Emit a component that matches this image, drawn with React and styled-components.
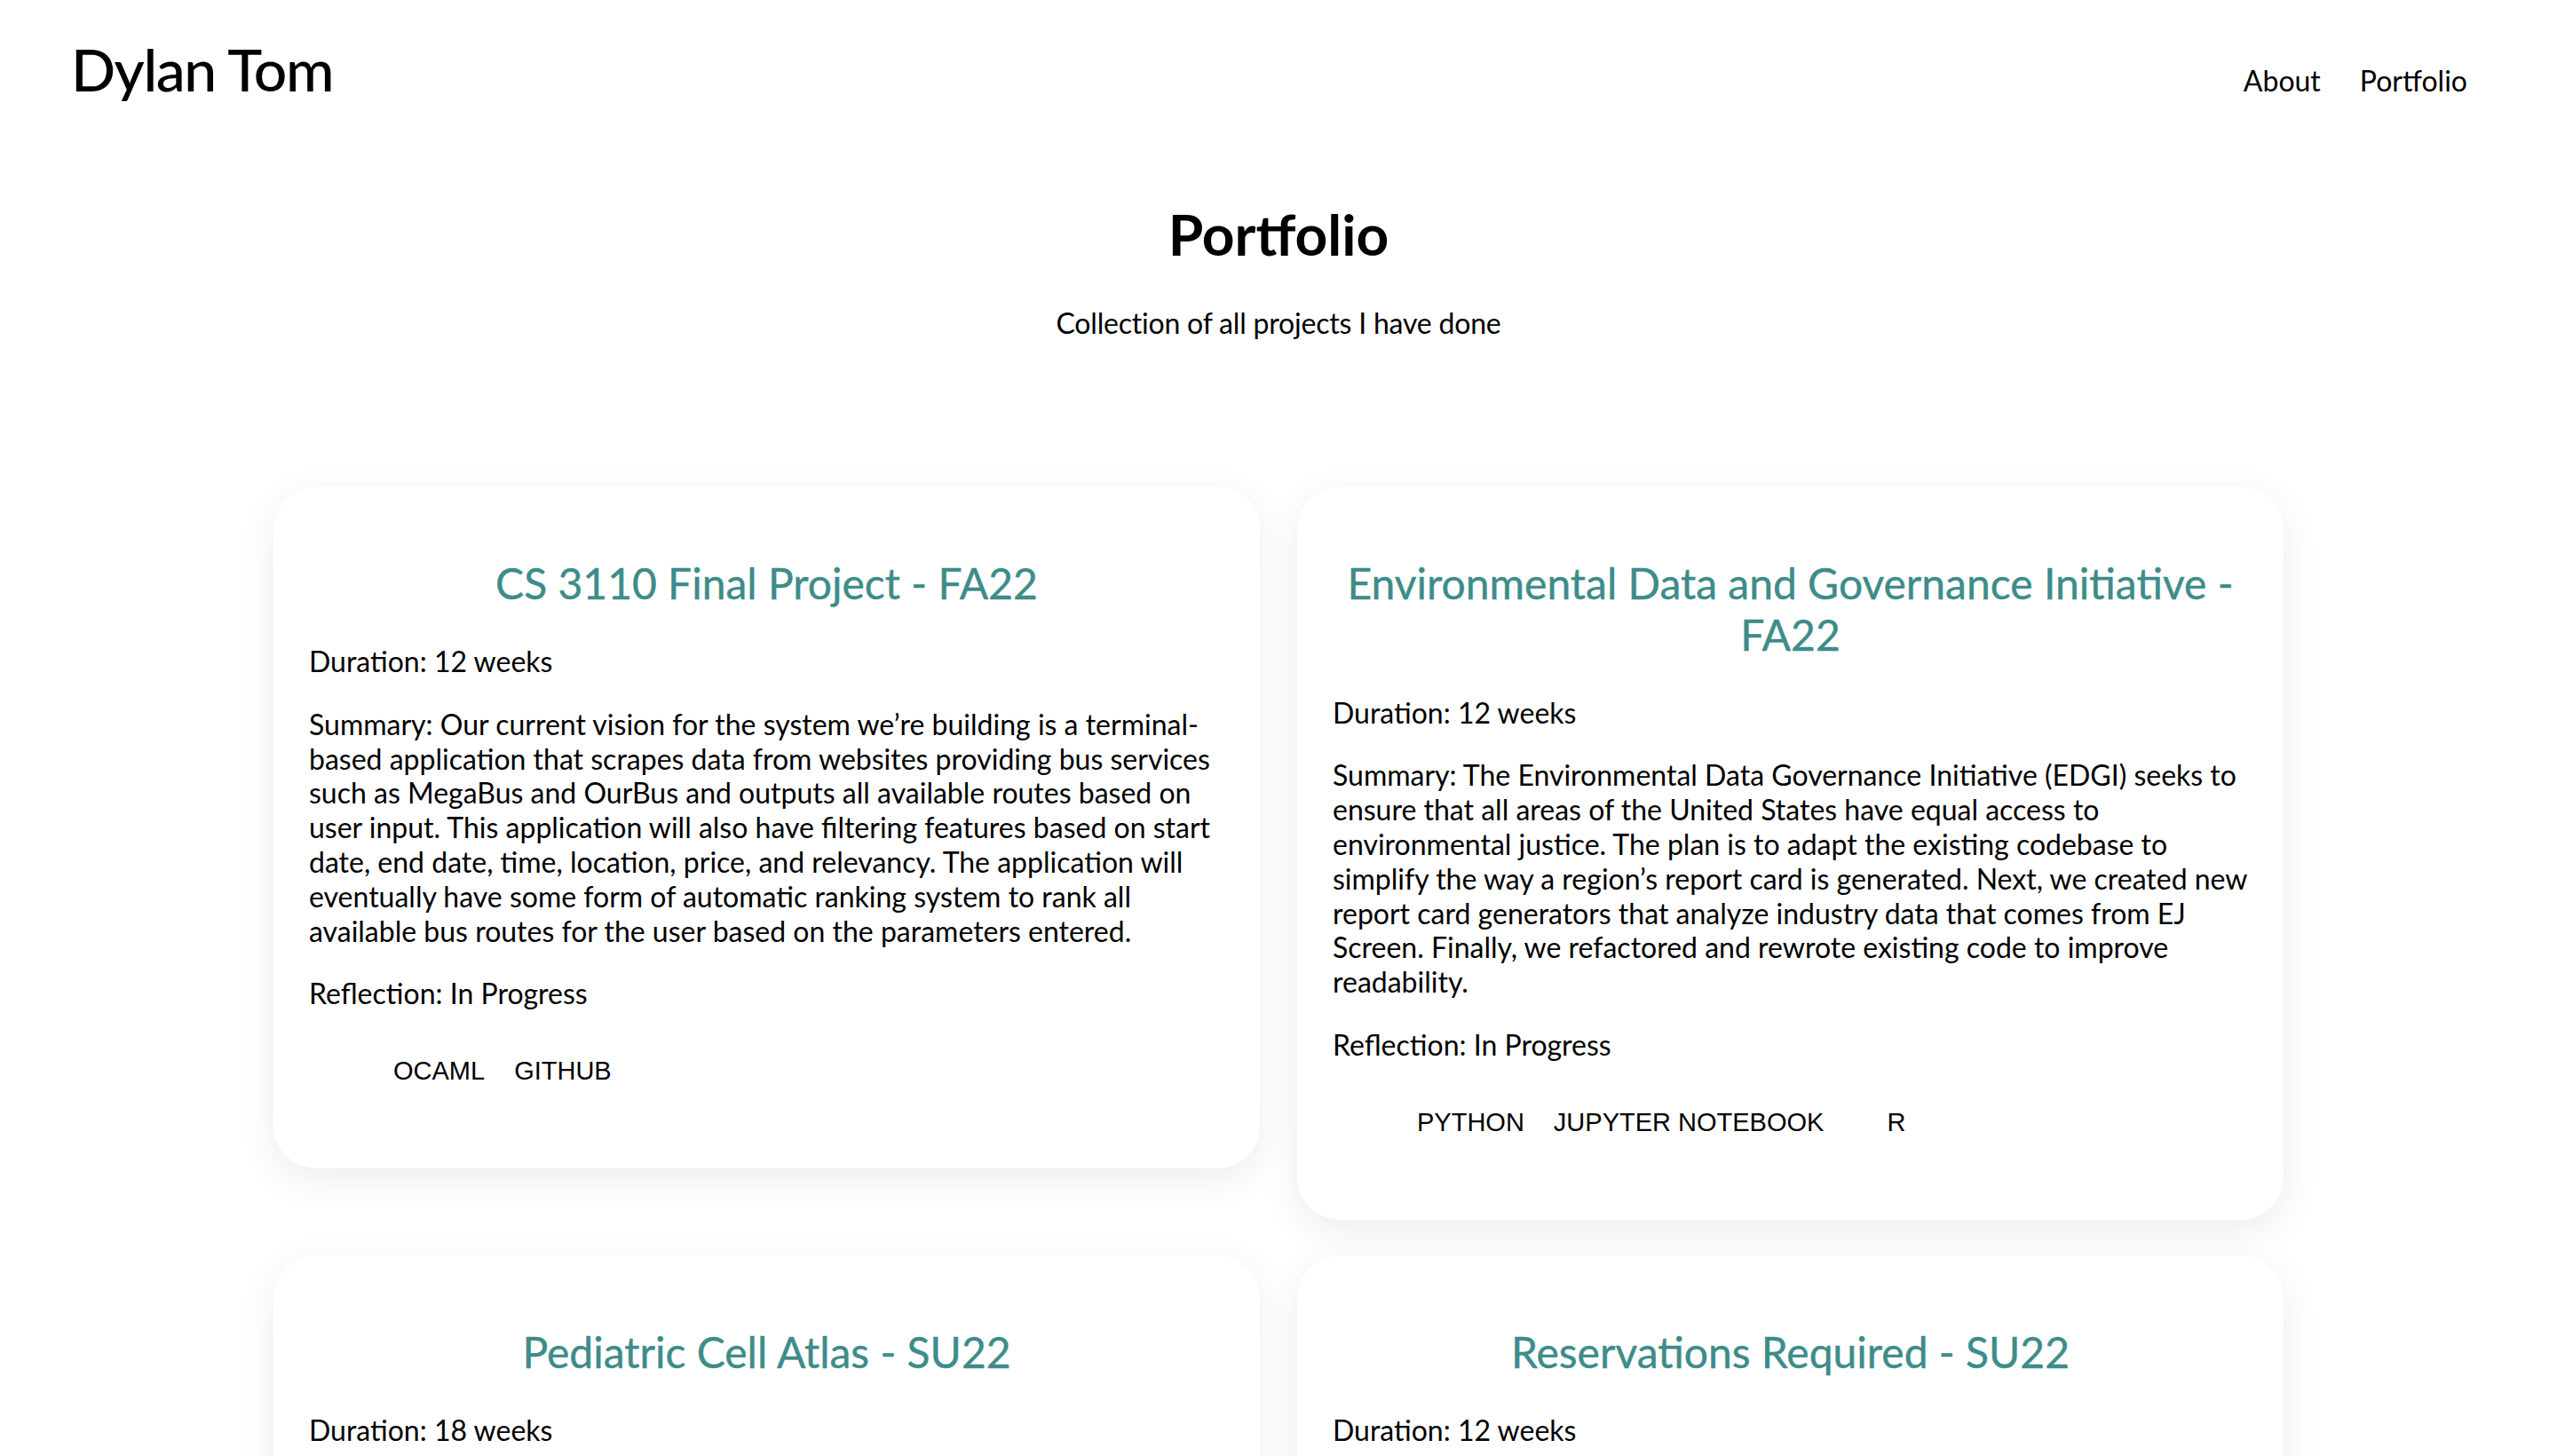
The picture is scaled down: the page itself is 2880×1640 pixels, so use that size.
import React from "react";
import styled, { createGlobalStyle } from "styled-components";

const GlobalStyle = createGlobalStyle`
  html, body {
    margin: 0;
    padding: 0;
    background: #ffffff;
  }
  body {
    font-family: "Lato", "Liberation Sans", sans-serif;
    font-size: 32px;
    color: #000000;
    -webkit-font-smoothing: antialiased;
  }
  * { box-sizing: border-box; }
`;

const Page = styled.div`
  width: 100%;
  min-height: 100vh;
  background: #ffffff;
`;

const Header = styled.header`
  display: flex;
  justify-content: space-between;
  align-items: baseline;
  padding: 38px 101px 0 80px;
`;

const Logo = styled.div`
  font-family: "Lato", sans-serif;
  font-size: 66px;
  font-weight: 500;
  line-height: 1.2;
  letter-spacing: -1.4px;
`;

const Nav = styled.nav`
  display: flex;
  gap: 44px;
  align-items: baseline;
`;

const NavLink = styled.a`
  font-size: 32px;
  line-height: 1.2;
  color: #000;
  text-decoration: none;
`;

const Intro = styled.section`
  text-align: center;
  margin-top: 109px;
`;

const Title = styled.h1`
  margin: 0;
  font-size: 64px;
  font-weight: 700;
  line-height: 1.2;
`;

const Subtitle = styled.p`
  margin: 42px 0 0;
  font-size: 32px;
  line-height: 1.2;
  letter-spacing: -0.2px;
`;

const Grid = styled.div`
  display: grid;
  grid-template-columns: repeat(2, 1fr);
  column-gap: 42px;
  row-gap: 40px;
  align-items: start;
  width: 2264px;
  margin: 165px auto 80px;
`;

const Card = styled.article`
  background: #ffffff;
  border-radius: 48px;
  padding: 40px 40px 41px;
  box-shadow: 0 12px 44px rgba(0, 0, 0, 0.075);
`;

const CardTitle = styled.h2`
  margin: 40px 0;
  text-align: center;
  font-size: 48px;
  font-weight: 400;
  line-height: 1.2;
  color: #3d8c89;
  -webkit-text-stroke: 0.4px #3d8c89;
`;

const Text = styled.p`
  margin: 32px 0;
  font-size: 32px;
  line-height: 38.8px;
  &:first-of-type { margin-top: 0; }
`;

const TagRow = styled.div`
  display: flex;
  align-items: baseline;
  gap: 33px;
  padding: 19px 0 52px 95px;
`;

const Tag = styled.span`
  font-family: "Liberation Sans", Arial, sans-serif;
  font-size: 29px;
  line-height: 1.15;
  text-transform: uppercase;
  margin-left: ${(p) => (p.$extra ? `${p.$extra}px` : "0")};
`;

const projects = [
  {
    title: "CS 3110 Final Project - FA22",
    duration: "12 weeks",
    summary:
      "Our current vision for the system we\u2019re building is a terminal-based application that scrapes data from websites providing bus services such as MegaBus and OurBus and outputs all available routes based on user input. This application will also have filtering features based on start date, end date, time, location, price, and relevancy. The application will eventually have some form of automatic ranking system to rank all available bus routes for the user based on the parameters entered.",
    reflection: "In Progress",
    tags: [{ name: "OCaml" }, { name: "GitHub" }],
  },
  {
    title: "Environmental Data and Governance Initiative - FA22",
    duration: "12 weeks",
    summary:
      "The Environmental Data Governance Initiative (EDGI) seeks to ensure that all areas of the United States have equal access to environmental justice. The plan is to adapt the existing codebase to simplify the way a region\u2019s report card is generated. Next, we created new report card generators that analyze industry data that comes from EJ Screen. Finally, we refactored and rewrote existing code to improve readability.",
    reflection: "In Progress",
    tags: [
      { name: "Python" },
      { name: "Jupyter Notebook" },
      { name: "R", extra: 38 },
    ],
  },
  {
    title: "Pediatric Cell Atlas - SU22",
    duration: "18 weeks",
    summary:
      "Worked on tools for organizing and presenting single-cell data from pediatric tissue samples.",
    reflection: "Completed",
    tags: [{ name: "Python" }, { name: "GitHub" }],
  },
  {
    title: "Reservations Required - SU22",
    duration: "12 weeks",
    summary:
      "Built a reservation system that lets users book and manage time slots.",
    reflection: "Completed",
    tags: [{ name: "JavaScript" }, { name: "GitHub" }],
  },
];

function ProjectCard({ project }) {
  return (
    <Card>
      <CardTitle>{project.title}</CardTitle>
      <Text>Duration: {project.duration}</Text>
      <Text>Summary: {project.summary}</Text>
      <Text>Reflection: {project.reflection}</Text>
      <TagRow>
        {project.tags.map((t) => (
          <Tag key={t.name} $extra={t.extra}>
            {t.name}
          </Tag>
        ))}
      </TagRow>
    </Card>
  );
}

export default function App() {
  return (
    <Page>
      <GlobalStyle />
      <Header>
        <Logo>Dylan Tom</Logo>
        <Nav>
          <NavLink href="#about">About</NavLink>
          <NavLink href="#portfolio">Portfolio</NavLink>
        </Nav>
      </Header>
      <Intro>
        <Title>Portfolio</Title>
        <Subtitle>Collection of all projects I have done</Subtitle>
      </Intro>
      <Grid>
        {projects.map((p) => (
          <ProjectCard key={p.title} project={p} />
        ))}
      </Grid>
    </Page>
  );
}
